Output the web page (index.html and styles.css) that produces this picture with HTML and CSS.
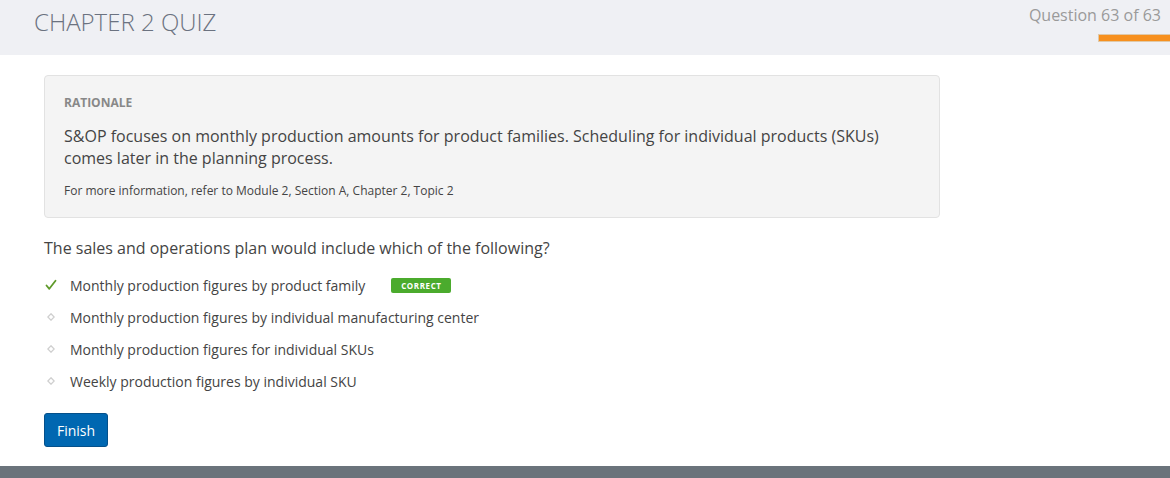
FILE: index.html
```html
<!DOCTYPE html>
<html>
<head>
<meta charset="utf-8">
<link rel="stylesheet" href="styles.css">
</head>
<body>
<header class="top">
  <h1 class="title">CHAPTER 2 QUIZ</h1>
  <div class="progress">
    <div class="count">Question 63 of 63</div>
    <div class="bar"></div>
  </div>
</header>
<main class="content">
  <section class="rationale">
    <h2 class="rat-label">RATIONALE</h2>
    <p class="rat-text">S&amp;OP focuses on monthly production amounts for product families. Scheduling for individual products (SKUs) comes later in the planning process.</p>
    <p class="rat-ref">For more information, refer to Module 2, Section A, Chapter 2, Topic 2</p>
  </section>
  <p class="question">The sales and operations plan would include which of the following?</p>
  <ul class="options">
    <li class="option">
      <span class="mark">
        <svg width="12" height="12" viewBox="0 0 12 12"><path d="M1.5 6.5 L4.3 9.8 L10.5 1.8" fill="none" stroke="#5f9a2a" stroke-width="1.8" stroke-linecap="round" stroke-linejoin="round"/></svg>
      </span>
      <span class="opt-text">Monthly production figures by product family</span>
      <span class="badge">CORRECT</span>
    </li>
    <li class="option">
      <span class="mark">
        <svg class="dot" width="8" height="8" viewBox="0 0 8 8"><path d="M4 0.8 L7.2 4 L4 7.2 L0.8 4 Z" fill="none" stroke="#cfcfcf" stroke-width="1.3"/></svg>
      </span>
      <span class="opt-text">Monthly production figures by individual manufacturing center</span>
    </li>
    <li class="option">
      <span class="mark">
        <svg class="dot" width="8" height="8" viewBox="0 0 8 8"><path d="M4 0.8 L7.2 4 L4 7.2 L0.8 4 Z" fill="none" stroke="#cfcfcf" stroke-width="1.3"/></svg>
      </span>
      <span class="opt-text">Monthly production figures for individual SKUs</span>
    </li>
    <li class="option">
      <span class="mark">
        <svg class="dot" width="8" height="8" viewBox="0 0 8 8"><path d="M4 0.8 L7.2 4 L4 7.2 L0.8 4 Z" fill="none" stroke="#cfcfcf" stroke-width="1.3"/></svg>
      </span>
      <span class="opt-text">Weekly production figures by individual SKU</span>
    </li>
  </ul>
  <button class="finish">Finish</button>
</main>
<footer class="bottom"></footer>
</body>
</html>
```

FILE: styles.css
```css
* { box-sizing: border-box; }
html, body { margin: 0; padding: 0; }
body {
  font-family: "Open Sans", "Liberation Sans", sans-serif;
  color: #444;
  background: #fff;
  width: 1170px;
  height: 478px;
  overflow: hidden;
  display: flex;
  flex-direction: column;
}
.top {
  height: 55px;
  background: #eff0f4;
  display: flex;
  justify-content: space-between;
  align-items: flex-start;
  padding-left: 34px;
}
.title {
  margin: 5px 0 0;
  font-size: 24px;
  font-weight: 300;
  color: #6b7280;
  letter-spacing: 0;
}
.progress {
  display: flex;
  flex-direction: column;
  align-items: flex-end;
}
.count {
  margin-top: 4px;
  margin-right: 9px;
  font-size: 16px;
  color: #9a9a9a;
  line-height: 22px;
}
.bar {
  margin-top: 8px;
  width: 72px;
  height: 8px;
  background: #f7901e;
  border: 1px solid #e0c9a8;
  border-right: 0;
  border-radius: 1px 0 0 1px;
}
.content {
  flex: 1;
  padding: 20px 0 0 44px;
}
.rationale {
  width: 896px;
  height: 143px;
  background: #f4f4f4;
  border: 1px solid #e2e2e2;
  border-radius: 4px;
  padding: 19px 19px 0;
}
.rat-label {
  margin: 0;
  font-size: 12px;
  font-weight: 700;
  color: #888;
  line-height: 16px;
}
.rat-text {
  margin: 14px 0 0;
  font-size: 16px;
  line-height: 22px;
  color: #444;
}
.rat-ref {
  margin: 13px 0 0;
  font-size: 12px;
  line-height: 17px;
  color: #444;
}
.question {
  margin: 19px 0 0;
  font-size: 16px;
  line-height: 22px;
  color: #444;
}
.options {
  list-style: none;
  margin: 10px 0 0;
  padding: 0;
}
.option {
  height: 32px;
  display: flex;
  align-items: center;
  font-size: 14px;
  color: #444;
}
.mark {
  width: 26px;
  display: flex;
  align-items: center;
  justify-content: flex-start;
  padding-left: 1px;
}
.mark .dot { margin-left: 2px; }
.badge {
  margin-left: 26px;
  background: #4bab2d;
  color: #fff;
  font-size: 8px;
  font-weight: 700;
  letter-spacing: 0.6px;
  width: 60px;
  height: 15px;
  line-height: 15px;
  text-align: center;
  border-radius: 2px;
}
.finish {
  margin-top: 16px;
  width: 64px;
  height: 34px;
  background: #0067b1;
  border: 1px solid #05508a;
  border-radius: 3px;
  color: #fff;
  font-family: "Open Sans", "Liberation Sans", sans-serif;
  font-size: 14px;
  padding: 0;
}
.bottom {
  height: 12px;
  background: #6b737b;
}
```
